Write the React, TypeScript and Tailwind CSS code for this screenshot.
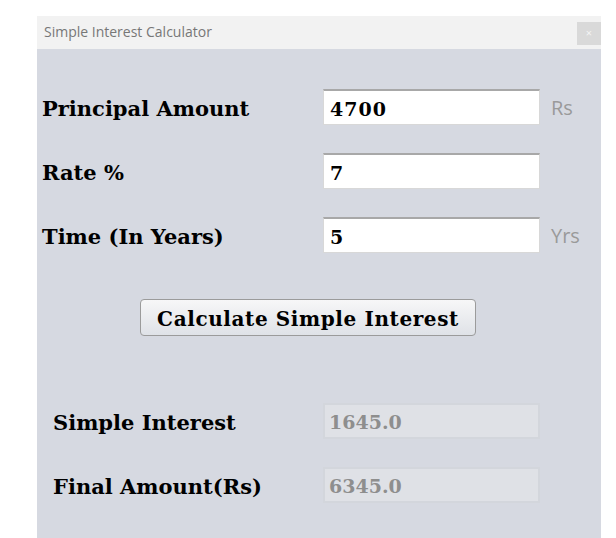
import React from "react";

const serif = "font-['DejaVu_Serif',serif] font-bold";

function InputRow({ label, value, unit }: { label: string; value: string; unit?: string }) {
  return (
    <div className="flex h-[36px] items-center">
      <div className={`${serif} w-[286px] shrink-0 pl-[5px] pt-[4px] text-[21px] text-black`}>{label}</div>
      <div className="flex h-[36px] w-[217px] shrink-0 items-center border border-[#d8d8d8] border-t-2 border-t-[#a8a8a8] bg-white pl-[6px] pt-[3px]">
        <span className={`${serif} text-[19px] tracking-[1px] text-black`}>{value}</span>
      </div>
      {unit && (
        <span className="ml-[11px] pt-[2px] font-['Open_Sans',sans-serif] text-[20px] text-[#9a9a9a]">{unit}</span>
      )}
    </div>
  );
}

function ResultRow({ label, value }: { label: string; value: string }) {
  return (
    <div className="flex h-[36px] items-center">
      <div className={`${serif} w-[286px] shrink-0 pl-[16px] pt-[3px] text-[21px] text-black`}>{label}</div>
      <div className="flex h-[36px] w-[217px] shrink-0 items-center border-2 border-[#d3d6dc] bg-[#dfe1e6] pl-[4px] pt-[2px]">
        <span className={`${serif} text-[19px] text-[#8e8e8e]`}>{value}</span>
      </div>
    </div>
  );
}

export default function App() {
  return (
    <div className="h-[538px] w-[616px] bg-white pl-[37px] pt-[16px]">
      <div className="flex h-[522px] w-[564px] flex-col bg-[#d6d9e1]">
        <div className="flex h-[33px] items-start bg-[#f2f2f2]">
          <span className="ml-[7px] mt-[7px] font-['Open_Sans',sans-serif] text-[14px] leading-[18px] text-[#777]">
            Simple Interest Calculator
          </span>
          <div className="ml-auto mt-[6px] flex h-[23px] w-[24px] items-center justify-center bg-[#d9d9d9] font-['Open_Sans',sans-serif] text-[11px] text-[#f4f4f4]">
            ×
          </div>
        </div>
        <div className="flex flex-col gap-[28px] pt-[40px]">
          <InputRow label="Principal Amount" value="4700" unit="Rs" />
          <InputRow label="Rate %" value="7" />
          <InputRow label="Time (In Years)" value="5" unit="Yrs" />
        </div>
        <button
          className={`${serif} ml-[103px] mt-[46px] h-[37px] w-[336px] rounded-[4px] border border-[#9b9b9b] bg-gradient-to-b from-[#f7f7f8] to-[#dfe2e7] pt-[2px] text-[20px] tracking-[0.6px] text-black`}
        >
          Calculate Simple Interest
        </button>
        <div className="mt-[67px] flex flex-col gap-[28px]">
          <ResultRow label="Simple Interest" value="1645.0" />
          <ResultRow label="Final Amount(Rs)" value="6345.0" />
        </div>
      </div>
    </div>
  );
}
